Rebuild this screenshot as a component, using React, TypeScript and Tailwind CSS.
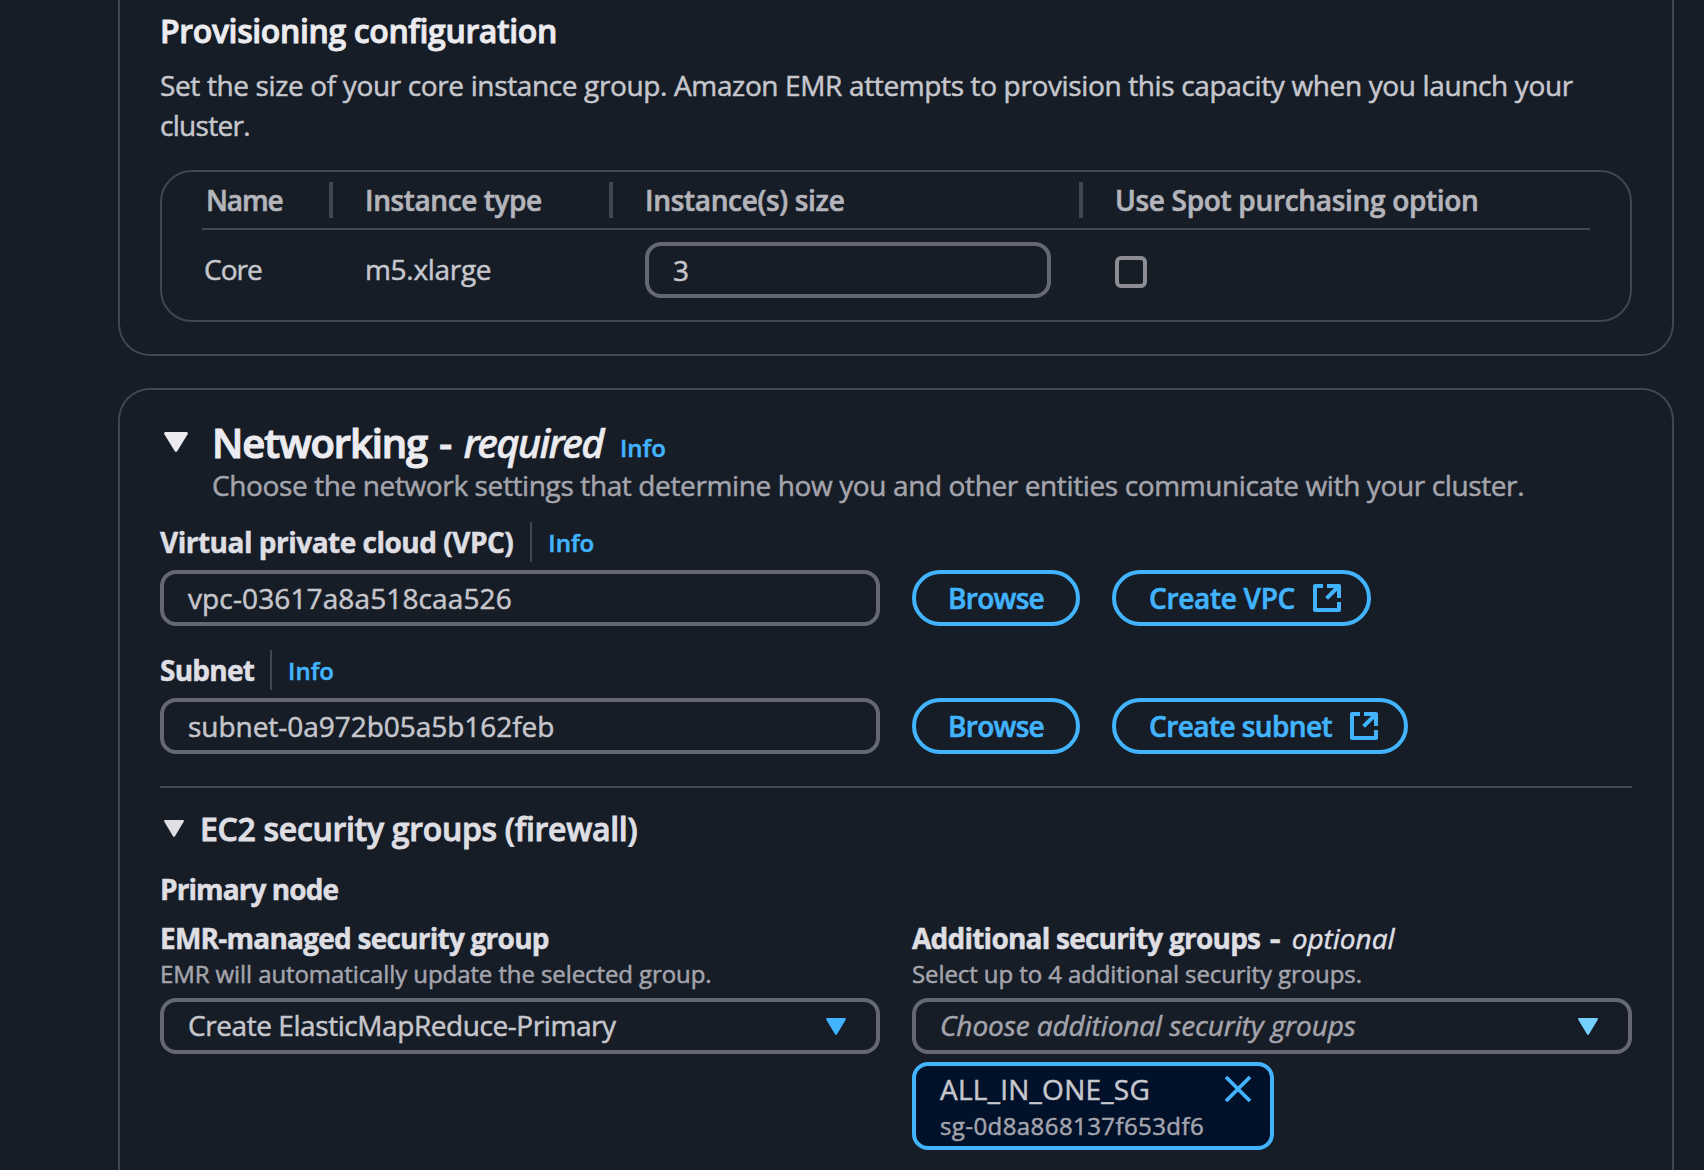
import type { ReactNode } from "react";

function CaretDown({ className }: { className: string }) {
  return (
    <svg viewBox="0 0 24 20" preserveAspectRatio="none" className={className} fill="currentColor">
      <path d="M1.4 0H22.6Q24.6 0.4 23.6 2.2L13.2 19.2Q12 20.8 10.8 19.2L0.4 2.2Q-0.6 0.4 1.4 0Z" />
    </svg>
  );
}

function ExternalIcon() {
  return (
    <svg viewBox="0 0 28 28" className="size-7" fill="none" stroke="currentColor" strokeWidth="4">
      <path d="M10 2H2V26H26V18" strokeLinejoin="round" />
      <path d="M14 2H26V14" strokeLinejoin="round" />
      <path d="M26 2L13.6 14.4" />
    </svg>
  );
}

function CloseIcon() {
  return (
    <svg viewBox="0 0 28 28" className="size-7" fill="none" stroke="currentColor" strokeWidth="3.8">
      <path d="M2 2L26 26M26 2L2 26" />
    </svg>
  );
}

function Info({ className = "" }: { className?: string }) {
  return (
    <a className={`text-2xl font-semibold text-[#42b4ff] [-webkit-text-stroke:0.5px] ${className}`}>Info</a>
  );
}

function TextField({ children }: { children: ReactNode }) {
  return (
    <div className="flex h-14 w-[720px] items-center rounded-2xl border-4 border-[#656871] px-6">{children}</div>
  );
}

function PillButton({ className = "", children }: { className?: string; children: ReactNode }) {
  return (
    <button
      className={`flex h-14 items-center rounded-full border-4 border-[#42b4ff] leading-[46px] font-semibold text-[#42b4ff] [-webkit-text-stroke:0.6px] ${className}`}
    >
      {children}
    </button>
  );
}

function HeaderCell({ className, children }: { className: string; children: ReactNode }) {
  return (
    <div className={`flex h-9 items-center font-semibold text-[#b4b4bb] ${className}`}>
      <span className="leading-9 whitespace-nowrap [-webkit-text-stroke:0.6px]">{children}</span>
    </div>
  );
}

export default function App() {
  return (
    <main className="h-[1170px] w-[1704px] overflow-hidden bg-[#161d26] pl-[118px] font-['Open_Sans','Noto_Sans',sans-serif] text-[28px] leading-10 text-[#c6c6cd] [-webkit-text-stroke:0.5px]">
      <section className="h-[356px] w-[1556px] rounded-b-[32px] border-2 border-t-0 border-[#424650] px-10 pt-[11px]">
        <h3 className="text-[32px] leading-10 font-semibold tracking-[-0.38px] text-[#ebebf0] [-webkit-text-stroke:0.9px]">
          Provisioning configuration
        </h3>
        <p className="mt-3.5 tracking-[-0.36px]">
          <span className="whitespace-nowrap">
            Set the size of your core instance group. Amazon EMR attempts to provision this capacity when you launch your
          </span>
          <br />
          <span className="tracking-[-0.69px]">cluster.</span>
        </p>
        <div className="mt-[25px] h-[152px] rounded-[32px] border-2 border-[#424650] px-10">
          <div className="flex h-[58px] items-center border-b-2 border-[#424650]">
            <HeaderCell className="w-[131px] border-r-4 border-[#424650] pl-1 tracking-[-1.1px]">Name</HeaderCell>
            <HeaderCell className="w-[280px] border-r-4 border-[#424650] pl-8 tracking-[-0.4px]">
              Instance type
            </HeaderCell>
            <HeaderCell className="w-[470px] border-r-4 border-[#424650] pl-8 tracking-[-0.33px]">
              Instance(s) size
            </HeaderCell>
            <HeaderCell className="pl-8 tracking-[-0.31px]">Use Spot purchasing option</HeaderCell>
          </div>
          <div className="flex h-20 items-center">
            <span className="-mt-0.5 w-[131px] pl-0.5 tracking-[-0.97px]">Core</span>
            <span className="-mt-0.5 w-[280px] pl-8 tracking-[-0.3px]">m5.xlarge</span>
            <div className="w-[470px] pl-8">
              <div className="flex h-14 w-[406px] items-center rounded-2xl border-4 border-[#656871] px-6">3</div>
            </div>
            <div className="mt-1 ml-8 size-8 rounded-md border-4 border-[#8c8c94]" />
          </div>
        </div>
      </section>

      <section className="mt-8 h-[820px] w-[1556px] rounded-t-[32px] border-2 border-b-0 border-[#424650] px-10 pt-7">
        <div className="flex h-[47px]">
          <CaretDown className="mt-[14px] ml-1 h-5 w-6 text-[#ebebf0]" />
          <h2 className="ml-6 text-[40px] leading-[49px] font-semibold whitespace-nowrap text-[#ebebf0] [-webkit-text-stroke:1.1px]">
            <span className="tracking-[-1.1px]">Networking</span>
            <span className="ml-[12px]">-</span>
            <span className="ml-[11.5px] font-['Noto_Sans'] font-medium tracking-[-1.7px] italic [-webkit-text-stroke:0.6px]">
              required
            </span>
          </h2>
          <Info className="ml-[17px] leading-[59px]" />
        </div>
        <p className="ml-[52px] tracking-[-0.38px] whitespace-nowrap text-[#a4a4ad]">
          Choose the network settings that determine how you and other entities communicate with your cluster.
        </p>

        <div className="mt-[17px] flex h-10">
          <label className="font-bold tracking-[-0.5px] text-[#dedee3]">Virtual private cloud (VPC)</label>
          <span className="ml-[17px] h-10 w-0.5 bg-[#424650]" />
          <Info className="ml-4 leading-[42px]" />
        </div>
        <div className="mt-2 flex gap-8">
          <TextField>
            <span className="tracking-[0.12px]">vpc-03617a8a518caa526</span>
          </TextField>
          <PillButton className="w-[168px] justify-center tracking-[-0.7px]">Browse</PillButton>
          <PillButton className="w-[259px] justify-between pr-[26px] pl-[33px] tracking-[-0.31px]">
            Create VPC
            <ExternalIcon />
          </PillButton>
        </div>

        <div className="mt-6 flex h-10">
          <label className="font-bold tracking-[-0.76px] text-[#dedee3]">Subnet</label>
          <span className="ml-4 h-10 w-0.5 bg-[#424650]" />
          <Info className="ml-4 leading-[42px]" />
        </div>
        <div className="mt-2 flex gap-8">
          <TextField>
            <span className="tracking-[-0.04px]">subnet-0a972b05a5b162feb</span>
          </TextField>
          <PillButton className="w-[168px] justify-center tracking-[-0.7px]">Browse</PillButton>
          <PillButton className="w-[296px] justify-between pr-[26px] pl-[33px] tracking-[-0.58px]">
            Create subnet
            <ExternalIcon />
          </PillButton>
        </div>

        <div className="mt-8 h-0.5 bg-[#424650]" />

        <div className="mt-5 flex h-10 text-[#dedee3]">
          <CaretDown className="mt-3 ml-1 h-[17px] w-5" />
          <h3 className="ml-4 text-[32px] leading-[41px] font-semibold tracking-[-0.31px] [-webkit-text-stroke:0.9px]">
            EC2 security groups (firewall)
          </h3>
        </div>
        <h4 className="mt-[21px] font-bold tracking-[-0.92px] text-[#dedee3]">Primary node</h4>

        <div className="mt-[9px] flex gap-8">
          <div className="w-[720px]">
            <label className="block font-bold tracking-[-0.76px] text-[#dedee3]">EMR-managed security group</label>
            <p className="text-2xl leading-8 tracking-[-0.09px] text-[#a4a4ad]">
              EMR will automatically update the selected group.
            </p>
            <div className="mt-2 flex h-14 items-center justify-between rounded-2xl border-4 border-[#656871] pr-[30px] pl-6">
              <span className="-translate-y-px tracking-[-0.43px]">Create ElasticMapReduce-Primary</span>
              <CaretDown className="h-[17px] w-5 text-[#42b4ff]" />
            </div>
          </div>
          <div className="w-[720px]">
            <label className="block text-[#dedee3]">
              <span className="font-bold tracking-[-0.77px]">Additional security groups</span>
              <span className="ml-[11px] inline-block w-[13px] scale-x-120 font-bold">-</span>
              <span className="ml-[7.5px] tracking-[-0.04px] italic">optional</span>
            </label>
            <p className="text-2xl leading-8 tracking-[-0.09px] text-[#a4a4ad]">
              Select up to 4 additional security groups.
            </p>
            <div className="mt-2 flex h-14 items-center justify-between rounded-2xl border-4 border-[#656871] pr-[30px] pl-6">
              <span className="-translate-y-px tracking-[-0.1px] text-[#a4a4ad] italic">
                Choose additional security groups
              </span>
              <CaretDown className="h-[17px] w-5 text-[#75cfff]" />
            </div>
            <div className="mt-2 flex h-[88px] w-[362px] justify-between rounded-2xl border-4 border-[#42b4ff] bg-[#001129] pr-[18px] pl-6">
              <div className="pt-[3px]">
                <div className="tracking-[0.25px]">ALL_IN_ONE_SG</div>
                <div className="mt-px text-2xl leading-8 tracking-[0.42px] text-[#a4a4ad]">sg-0d8a868137f653df6</div>
              </div>
              <span className="mt-[9px] text-[#42b4ff]">
                <CloseIcon />
              </span>
            </div>
          </div>
        </div>
      </section>
    </main>
  );
}
